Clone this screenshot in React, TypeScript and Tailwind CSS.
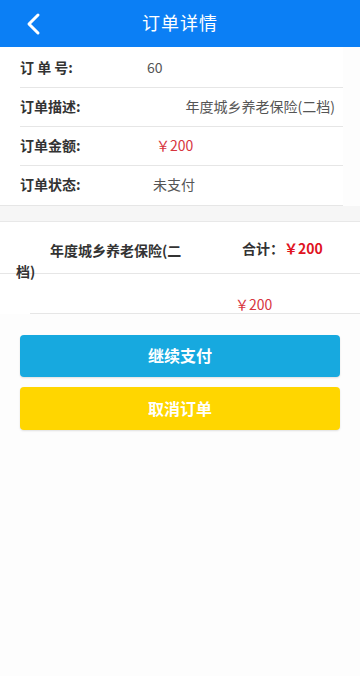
import React from "react";

const FONT = { fontFamily: '"Noto Sans CJK SC", "Noto Sans", sans-serif' };

type Row = { label: string; value: string; kind: "plain" | "price" | "right"; pad: string };

const ROWS: Row[] = [
  { label: "订 单 号:", value: "60", kind: "plain", pad: "pl-0" },
  { label: "订单描述:", value: "年度城乡养老保险(二档)", kind: "right", pad: "pl-0" },
  { label: "订单金额:", value: "￥200", kind: "price", pad: "pl-[9px]" },
  { label: "订单状态:", value: "未支付", kind: "plain", pad: "pl-[6px]" },
];

function Header() {
  return (
    <div className="relative flex h-[47px] items-center justify-center bg-[#0b7ff5]">
      <button className="absolute left-[22px] top-[10px] p-0.5" aria-label="返回">
        <svg width="20" height="24" viewBox="0 0 20 24" fill="none" stroke="white" strokeWidth="3" strokeLinecap="round" strokeLinejoin="round">
          <path d="M14 3 5 12l9 9" />
        </svg>
      </button>
      <h1 className="pb-[2px] text-[18px] font-normal tracking-[1px] text-white">订单详情</h1>
    </div>
  );
}

export default function App() {
  return (
    <div style={FONT} className="min-h-[676px] w-[360px] bg-[#fdfdfd] text-[#333]">
      <Header />

      <div className="mr-[17px] border-b border-[#e6e6e6] bg-white pt-[2px]">
        {ROWS.map((row, i) => (
          <div
            key={row.label}
            className={
              "ml-5 flex h-[39px] items-center pb-[3px] text-sm " +
              (i < ROWS.length - 1 ? "border-b border-[#e6e6e6]" : "")
            }
          >
            <span className="w-[127px] shrink-0 font-bold text-[#333]">{row.label}</span>
            {row.kind === "right" ? (
              <span className="flex-1 pr-2 text-right text-[#555]">{row.value}</span>
            ) : (
              <span className={row.pad + " " + (row.kind === "price" ? "text-[#d7343e]" : "text-[#555]")}>
                {row.value}
              </span>
            )}
          </div>
        ))}
      </div>

      <div className="h-4 border-b border-[#e8e8e8] bg-[#f6f6f6]" />

      <div className="bg-white">
        <div className="flex h-[52px] items-start border-b border-[#e6e6e6] text-sm">
          <div className="w-[187px] shrink-0 pl-4 pt-[18px] indent-[34px] font-bold leading-[21px] text-[#333]">
            年度城乡养老保险(二档)
          </div>
          <div className="pl-[55px] pt-[16px] font-bold leading-[21px]">
            <span className="text-[#333]">合计：</span>
            <span className="text-[#e0141f]">￥200</span>
          </div>
        </div>
        <div className="ml-[30px] h-[40px] border-b border-[#e6e6e6] pl-[205px] pt-[20px] text-sm leading-5 text-[#d7343e]">
          ￥200
        </div>
      </div>

      <div className="flex flex-col gap-[10px] px-5 pt-[21px]">
        <button className="h-[42px] w-full rounded-[4px] bg-[#17a9df] pb-[2px] text-base font-bold text-white shadow-[0_1px_2px_rgba(0,0,0,0.12)]">
          继续支付
        </button>
        <button className="h-[43px] w-full rounded-[4px] bg-[#ffd600] pb-[2px] text-base font-bold text-white shadow-[0_1px_2px_rgba(0,0,0,0.12)]">
          取消订单
        </button>
      </div>
    </div>
  );
}
